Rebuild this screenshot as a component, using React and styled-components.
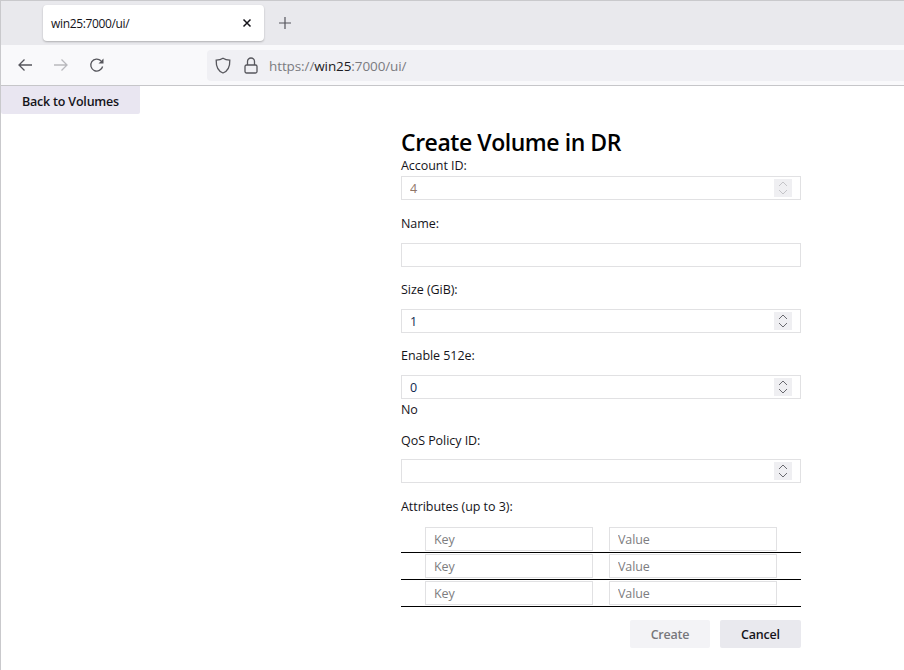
import React from "react";
import styled, { createGlobalStyle } from "styled-components";

const Global = createGlobalStyle`
  html, body { margin: 0; padding: 0; background: #fff; }
  body { font-family: "Open Sans", "Noto Sans", sans-serif; color: #15141a; }
  * { box-sizing: border-box; }
`;

const Page = styled.div`
  width: 904px;
  height: 670px;
  overflow: hidden;
  border-left: 1px solid #c9c9cc;
  border-top: 1px solid #c9c9cc;
  background: #fff;
`;

const TabStrip = styled.div`
  height: 44px;
  background: #e9e9ed;
  display: flex;
  align-items: flex-start;
  padding: 4px 0 0 42px;
`;

const Tab = styled.div`
  width: 221px;
  height: 36px;
  background: #fff;
  border-radius: 4px;
  box-shadow: 0 1px 2px rgba(0, 0, 0, 0.25);
  display: flex;
  align-items: center;
  justify-content: space-between;
  padding: 0 11px 0 8px;
  font-size: 12px;
  letter-spacing: -0.35px;
`;

const NewTab = styled.div`
  margin: 10px 0 0 13px;
  width: 16px;
  height: 16px;
  display: flex;
  color: #55555c;
`;

const Toolbar = styled.div`
  height: 41px;
  background: #f9f9fb;
  border-bottom: 1px solid #c6c6c9;
  display: flex;
  align-items: center;
  padding: 0 0 0 16px;
`;

const NavIcon = styled.svg`
  width: 16px;
  height: 16px;
  margin-right: 20px;
  flex: none;
  color: ${(p) => (p.$dim ? "#b9b9bd" : "#56565c")};
`;

const UrlBar = styled.div`
  flex: 1;
  height: 31px;
  margin-left: 82px;
  margin-top: 1px;
  background: #f0f0f4;
  border-radius: 4px 0 0 4px;
  display: flex;
  align-items: center;
  padding-left: 8px;
  font-size: 13.5px;
  color: #7b7b80;
  letter-spacing: -0.1px;
`;

const UrlIcon = styled.svg`
  width: ${(p) => p.$w}px;
  height: 17px;
  margin-right: ${(p) => p.$gap}px;
  flex: none;
  color: #56565c;
`;

const Host = styled.span`
  color: #1c1b22;
`;

const BackButton = styled.button`
  display: block;
  width: 139px;
  height: 28px;
  border: 0;
  border-radius: 0 0 2px 2px;
  background: #e9e6f1;
  color: #15141a;
  font: 600 12.5px "Open Sans", sans-serif;
  letter-spacing: -0.2px;
  padding: 2px 0 0;
`;

const Form = styled.form`
  width: 400px;
  margin-left: 400px;
  padding-top: 13px;
`;

const Title = styled.h1`
  margin: 0;
  font-size: 23px;
  font-weight: 600;
  line-height: 30px;
  letter-spacing: -0.45px;
  color: #000;
`;

const Label = styled.div`
  font-size: 12.5px;
  line-height: 18px;
  letter-spacing: -0.05px;
  color: #15141a;
  margin-top: ${(p) => p.$top ?? 14}px;
  margin-bottom: ${(p) => p.$bottom ?? 10}px;
`;

const FieldWrap = styled.div`
  position: relative;
  height: 24px;
`;

const TextInput = styled.input`
  display: block;
  width: 100%;
  height: 24px;
  border: 1px solid #e1e1e3;
  background: #fff;
  padding: 0 8px;
  font: 12.5px "Open Sans", sans-serif;
  color: ${(p) => (p.disabled ? "#8f7667" : "#10274f")};
  outline: none;
  &::placeholder { color: #7d7d80; opacity: 1; }
`;

const Spinner = styled.div`
  position: absolute;
  right: 9px;
  top: 3px;
  width: 18px;
  height: 18px;
  background: #efeff2;
  display: flex;
  align-items: center;
  justify-content: center;
  color: ${(p) => (p.$dim ? "#c4c4c8" : "#6a6a70")};
`;

const Note = styled.div`
  font-size: 12.5px;
  line-height: 18px;
  letter-spacing: -0.05px;
  margin-top: 2px;
`;

const AttrRow = styled.div`
  display: grid;
  grid-template-columns: 168px 168px;
  column-gap: 16px;
  padding: 0 24px 1px;
  height: 26px;
  margin-bottom: 1px;
  border-bottom: 1px solid #000;
`;

const AttrInput = styled.input`
  display: block;
  width: 168px;
  height: 24px;
  border: 1px solid #e1e1e3;
  padding: 0 8px;
  font: 12.5px "Open Sans", sans-serif;
  letter-spacing: -0.1px;
  outline: none;
  &::placeholder { color: #7d7d80; opacity: 1; }
`;

const Actions = styled.div`
  display: flex;
  justify-content: flex-end;
  gap: 10px;
  margin-top: 13px;
`;

const Button = styled.button`
  width: ${(p) => p.$w}px;
  height: 28px;
  border: 0;
  border-radius: 2px;
  padding: 0;
  background: ${(p) => (p.disabled ? "#f3f3f6" : "#e9e9ee")};
  color: ${(p) => (p.disabled ? "#77777b" : "#15141a")};
  font: 600 12.5px "Open Sans", sans-serif;
  letter-spacing: -0.2px;
`;

const SpinIcon = () => (
  <svg width="12" height="16" viewBox="0 0 12 16" fill="none" stroke="currentColor" strokeWidth="1">
    <path d="M2 6l4-4 4 4M2 10l4 4 4-4" />
  </svg>
);

const NumberField = ({ value, disabled }) => (
  <FieldWrap>
    <TextInput type="text" readOnly value={value} disabled={disabled} />
    <Spinner $dim={disabled}><SpinIcon /></Spinner>
  </FieldWrap>
);

const Attr = () => (
  <AttrRow>
    <AttrInput placeholder="Key" />
    <AttrInput placeholder="Value" />
  </AttrRow>
);

export default function App() {
  return (
    <Page>
      <Global />
      <TabStrip>
        <Tab>
          <span>win25:7000/ui/</span>
          <svg width="12" height="12" viewBox="0 0 12 12" stroke="#15141a" strokeWidth="1.5" fill="none">
            <path d="M2.500 2.500l7 7M9.500 2.500l-7 7" />
          </svg>
        </Tab>
        <NewTab>
          <svg width="16" height="16" viewBox="0 0 16 16" stroke="currentColor" strokeWidth="1.2" fill="none">
            <path d="M8 2v12M2 8h12" />
          </svg>
        </NewTab>
      </TabStrip>
      <Toolbar>
        <NavIcon viewBox="0 0 16 16" fill="none" stroke="currentColor" strokeWidth="1.3">
          <path d="M15 8H2M7.500 2.500L2 8l5.500 5.500" />
        </NavIcon>
        <NavIcon $dim viewBox="0 0 16 16" fill="none" stroke="currentColor" strokeWidth="1.3">
          <path d="M1 8h13M8.500 2.500L14 8l-5.500 5.500" />
        </NavIcon>
        <NavIcon viewBox="0 0 16 16" fill="none" stroke="currentColor" strokeWidth="1.3">
          <path d="M13.600 9.500A6 6 0 1 1 12 3.800" />
          <path d="M14.500 1.500v5h-5z" fill="currentColor" stroke="none" />
        </NavIcon>
        <UrlBar>
          <UrlIcon $w={16} $gap={13} viewBox="0 0 16 17" fill="none" stroke="currentColor" strokeWidth="1.3">
            <path d="M8 1.200c2 1.300 4 1.800 6.800 2 .2 6.300-1.900 10.800-6.800 12.800C3.100 14 1 9.500 1.200 3.200 4 3 6 2.500 8 1.200z" />
          </UrlIcon>
          <UrlIcon $w={14} $gap={11} viewBox="0 0 14 17" fill="none" stroke="currentColor" strokeWidth="1.3">
            <rect x="1" y="8" width="12" height="8" rx="1.500" />
            <path d="M3.500 8V4.500a3.500 3.500 0 0 1 7 0V8" />
          </UrlIcon>
          <span>https://<Host>win25</Host>:7000/ui/</span>
        </UrlBar>
      </Toolbar>
      <BackButton type="button">Back to Volumes</BackButton>
      <Form>
        <Title>Create Volume in DR</Title>
        <Label $top={0} $bottom={1}>Account ID:</Label>
        <NumberField value="4" disabled />
        <Label $top={15} $bottom={10}>Name:</Label>
        <TextInput type="text" />
        <Label>Size (GiB):</Label>
        <NumberField value="1" />
        <Label>Enable 512e:</Label>
        <NumberField value="0" />
        <Note>No</Note>
        <Label $top={13} $bottom={9}>QoS Policy ID:</Label>
        <NumberField value="" />
        <Label $top={15} $bottom={11}>Attributes (up to 3):</Label>
        <Attr />
        <Attr />
        <Attr />
        <Actions>
          <Button type="button" disabled $w={80}>Create</Button>
          <Button type="button" $w={81}>Cancel</Button>
        </Actions>
      </Form>
    </Page>
  );
}
